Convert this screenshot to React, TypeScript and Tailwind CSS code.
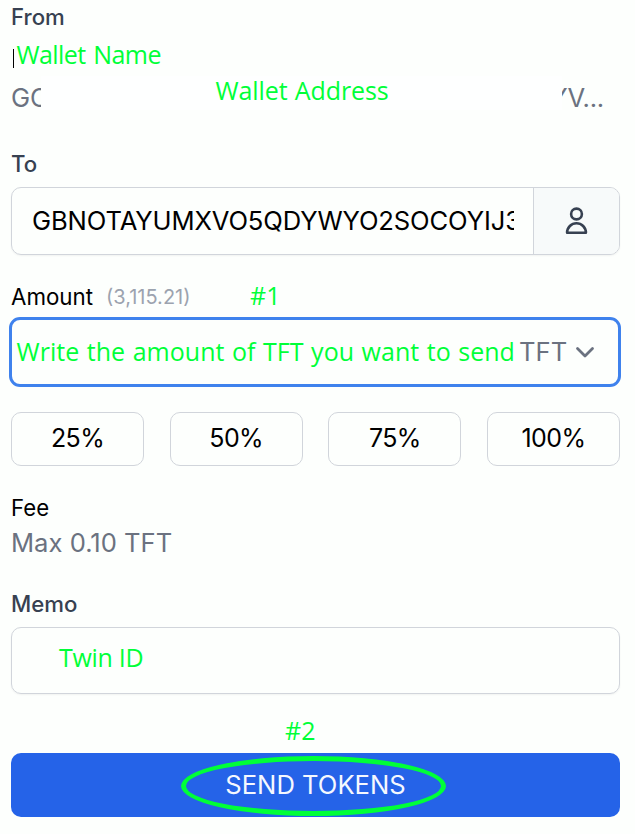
import type { ReactNode } from "react";

function Note({ children, className = "" }: { children: ReactNode; className?: string }) {
  return (
    <span
      className={`block whitespace-nowrap font-['Open_Sans',sans-serif] text-[25px] leading-[36px] text-[#00ff38] ${className}`}
    >
      {children}
    </span>
  );
}

function Label({ children }: { children: ReactNode }) {
  return <div className="text-[22.2px] leading-[34px] font-medium text-[#374151]">{children}</div>;
}

function PersonIcon() {
  return (
    <svg width="24" height="30" viewBox="0 0 24 30" fill="none" stroke="#374151" strokeWidth="2.6" strokeLinejoin="round">
      <circle cx="11.5" cy="8" r="5.4" />
      <path d="M2.1 26.8a9.4 9.6 0 0 1 18.8 0Z" />
    </svg>
  );
}

const shares = ["25%", "50%", "75%", "100%"];

export default function App() {
  return (
    <main className="h-[834px] w-[635px] overflow-hidden bg-[#fdfffd] pr-[15px] pl-[11px] font-['Inter',sans-serif] text-[25.6px] text-black">
      <Label>From</Label>
      <div className="flex h-[42px] items-start">
        <span className="mt-[15px] ml-[2px] h-[19px] w-px bg-black" />
        <Note className="mt-[2px] ml-[2.5px] tracking-[-0.6px] [word-spacing:2px]">Wallet Name</Note>
      </div>
      <div className="flex h-[71px] items-start text-[#6b7280]">
        <span className="mt-[4px] w-[30px] overflow-hidden leading-[36px] whitespace-nowrap">GC</span>
        <div className="flex h-[34px] w-[521px] bg-[#feffff] pl-[174.5px]">
          <Note className="-mt-[4px] tracking-[-0.1px] [word-spacing:1px]">Wallet Address</Note>
        </div>
        <span className="mt-[4px] flex w-[42px] justify-end overflow-hidden leading-[36px] tracking-[-0.2px] whitespace-nowrap">
          YV...
        </span>
      </div>
      <Label>To</Label>
      <div className="mt-[6px] flex h-[68px] overflow-hidden rounded-[10px] border-[1.5px] border-[#d1d5db] shadow-xs">
        <div className="flex flex-1 items-center overflow-hidden pl-[20px]">
          <span className="w-[482px] overflow-hidden tracking-[-0.13px] whitespace-nowrap">
            GBNOTAYUMXVO5QDYWYO2SOCOYIJ3
          </span>
        </div>
        <div className="flex w-[86px] items-center justify-center border-l border-[#d1d5db] bg-[#f7fafa]">
          <PersonIcon />
        </div>
      </div>
      <div className="mt-[24px] flex h-[36px] items-center">
        <span className="w-[95px] text-[22.3px]">Amount</span>
        <span className="w-[144px] text-[20px] text-[#9ca3af]">(3,115.21)</span>
        <Note className="-mt-[4px]">#1</Note>
      </div>
      <div className="mt-[2px] -mr-[1px] -ml-[2px] flex h-[70px] items-center rounded-[11px] border-3 border-[#3f82ed] pl-[4.5px]">
        <Note className="-mt-[3px] w-[502.5px] tracking-[0.05px] [word-spacing:0.9px]">
          Write the amount of TFT you want to send
        </Note>
        <span className="w-[56px] text-[#6b7280]">TFT</span>
        <svg width="20" height="14" viewBox="0 0 20 14" fill="none" stroke="#6b7280" strokeWidth="2.8" strokeLinecap="round" strokeLinejoin="round">
          <path d="m2.5 3.5 7.5 7.5L17.5 3.5" />
        </svg>
      </div>
      <div className="mt-[25px] grid h-[54px] grid-cols-4 gap-[25.6px]">
        {shares.map((share) => (
          <button key={share} className="rounded-[10px] border border-[#d1d5db] text-[25px] tracking-[-0.6px]">
            {share}
          </button>
        ))}
      </div>
      <div className="mt-[25px] text-[22.2px] leading-[34px]">Fee</div>
      <div className="leading-[36px] text-[#6b7280]">Max 0.10 TFT</div>
      <div className="mt-[26px]">
        <Label>Memo</Label>
      </div>
      <div className="mt-[6px] flex h-[67px] items-start rounded-[10px] border-[1.5px] border-[#d1d5db] pt-[11px] pl-[47px] shadow-xs">
        <Note className="tracking-[-0.3px]">Twin ID</Note>
      </div>
      <div className="flex h-[59px] items-start pt-[18px] pl-[274px]">
        <Note>#2</Note>
      </div>
      <button className="relative flex h-[64px] w-full items-center justify-center rounded-[10px] bg-[#2563e8] text-[#f5f8ff]">
        SEND TOKENS
        <span className="absolute top-[3px] left-[170px] h-[60px] w-[265px] rounded-[50%] border-[5px] border-[#00ff38]" />
      </button>
    </main>
  );
}
